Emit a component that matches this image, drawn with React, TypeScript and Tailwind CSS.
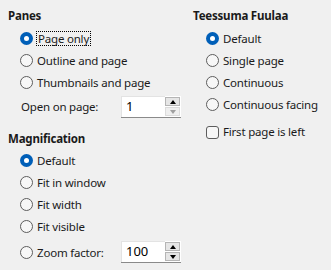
import React from 'react'

const font = { fontFamily: '"Noto Sans", "Liberation Sans", sans-serif' }

function Radio({ label, checked, focus }: { label: string; checked?: boolean; focus?: boolean }) {
  return (
    <div className="flex h-[22px] items-center">
      {checked ? (
        <span className="flex size-[13px] items-center justify-center rounded-full bg-[#005fb8]">
          <span className="size-[5px] rounded-full bg-white" />
        </span>
      ) : (
        <span className="size-[13px] rounded-full border border-[#5d5d5d] bg-[#f7f7f7]" />
      )}
      <span
        className={
          focus
            ? 'ml-[3px] border border-dotted border-black px-px leading-[13px]'
            : 'ml-[4px] leading-[13px]'
        }
      >
        {label}
      </span>
    </div>
  )
}

function Spin({ value, downDisabled }: { value: string; downDisabled?: boolean }) {
  return (
    <div className="flex h-[22px] w-[60px] border-b border-[#8a8a8a] bg-white">
      <div className="flex flex-1 items-center border-l border-t border-[#e3e3e3] pl-[4px] text-[13px] tracking-normal text-black">
        {value}
      </div>
      <div className="flex w-[16px] flex-col gap-px py-px pr-px">
        <div className="flex flex-1 items-center justify-center border border-[#b5b5b5] bg-[#e6e6e6]">
          <span className="h-0 w-0 border-x-[3.5px] border-b-[4px] border-x-transparent border-b-black" />
        </div>
        <div
          className={
            downDisabled
              ? 'flex flex-1 items-center justify-center border border-[#dcdcdc] bg-[#efefef]'
              : 'flex flex-1 items-center justify-center border border-[#b5b5b5] bg-[#e6e6e6]'
          }
        >
          <span
            className={
              downDisabled
                ? 'h-0 w-0 border-x-[3.5px] border-t-[4px] border-x-transparent border-t-[#a0a0a0]'
                : 'h-0 w-0 border-x-[3.5px] border-t-[4px] border-x-transparent border-t-black'
            }
          />
        </div>
      </div>
    </div>
  )
}

export default function App() {
  return (
    <div
      className="flex h-[270px] w-[331px] bg-[#f0f0f0] text-[11.5px] tracking-[-0.2px] text-[#1a1a1a]"
      style={font}
    >
      <div className="w-[185px] pl-[8px] pt-[8px]">
        <div className="h-[16px] font-bold leading-[16px]">Panes</div>
        <div className="mt-[3px] pl-[12px]">
          <Radio label="Page only" checked focus />
          <Radio label="Outline and page" />
          <Radio label="Thumbnails and page" />
        </div>
        <div className="mt-[3px] flex items-center pl-[13px]">
          <span className="w-[100px]">Open on page:</span>
          <Spin value="1" downDisabled />
        </div>
        <div className="mt-[13px] h-[16px] font-bold leading-[16px]">Magnification</div>
        <div className="mt-[2px] pl-[12px]">
          <Radio label="Default" checked />
          <Radio label="Fit in window" />
          <Radio label="Fit width" />
          <Radio label="Fit visible" />
          <div className="mt-[4px] flex items-center">
            <div className="w-[101px]">
              <Radio label="Zoom factor:" />
            </div>
            <Spin value="100" />
          </div>
        </div>
      </div>
      <div className="pl-[8px] pt-[8px]">
        <div className="h-[16px] font-bold leading-[16px]">Teessuma Fuulaa</div>
        <div className="mt-[3px] pl-[13px]">
          <Radio label="Default" checked />
          <Radio label="Single page" />
          <Radio label="Continuous" />
          <Radio label="Continuous facing" />
          <div className="mt-[6px] flex h-[22px] items-center">
            <span className="size-[13px] rounded-[3px] border border-[#5d5d5d] bg-[#f7f7f7]" />
            <span className="ml-[4px]">First page is left</span>
          </div>
        </div>
      </div>
    </div>
  )
}
